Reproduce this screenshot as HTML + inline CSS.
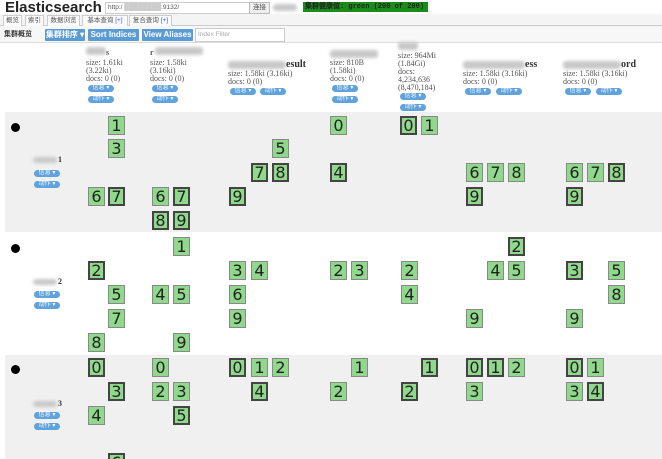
<!DOCTYPE html>
<html style="width:662px;height:459px;overflow:hidden"><head><meta charset="utf-8"><style>
body{margin:0;width:662px;height:459px;overflow:hidden;background:#fff;font-family:"Liberation Sans","Noto Sans CJK SC",sans-serif;position:relative}
.a{position:absolute}
.bl{position:absolute;background:#c8c8c8;filter:blur(1.5px);border-radius:3px}
.s{position:absolute;width:15px;height:17px;background:#90d98c;border:1px solid #888;font:16px/17px "DejaVu Sans",sans-serif;color:#222;text-align:center}
.p{border:2px solid #444;width:13px;height:15px;line-height:15px}
.t{position:absolute;font:8px/8px "Liberation Serif","Noto Serif CJK SC",serif;color:#555;white-space:nowrap}
.b{position:absolute;width:26px;height:7px;background:#5fa2dc;border-radius:4px;color:#fff;font-size:6px;line-height:7px;text-align:center}
.tb{position:absolute;top:29px;height:12px;background:#5b9bd5;color:#fff;font:bold 8px/12px "Liberation Sans","Noto Sans CJK SC",sans-serif;text-align:center;border-radius:1px}
.row{position:absolute;left:5px;width:657px;background:#f0f0f0}
.dot{position:absolute;width:9px;height:9px;border-radius:50%;background:#000}
.tab{position:absolute;top:15px;height:10px;border:1px solid #ccc;border-bottom:none;font-size:6.5px;line-height:10px;color:#555;text-align:center;background:#fafafa}
</style></head><body>
<div class="a" style="left:0;top:14px;width:662px;height:12px;background:#f4f4f4"></div>
<div class="a" style="left:5px;top:0;font:bold 15px/15px 'Liberation Sans',sans-serif;color:#222">Elasticsearch</div>
<div class="a" style="left:105px;top:2px;width:141px;height:10px;border:1px solid #ccc;font-size:6.5px;line-height:10px;color:#555;padding-left:2px">http:/ <span style="color:#ccc">████████</span>:9132/</div>
<div class="a" style="left:249px;top:2px;width:19px;height:10px;border:1px solid #bbb;background:#eee;font-size:6.5px;line-height:10px;text-align:center;color:#444">连接</div>
<div class="bl" style="left:273px;top:4px;width:24px;height:7px"></div>
<div class="a" style="left:303px;top:2px;width:123px;height:10px;background:#1a8c1a;font:bold 7px/10px 'Liberation Mono',monospace;color:#222;padding-left:2px">集群健康值: green (200 of 200)</div>
<div class="a" style="left:0;top:25px;width:662px;height:1px;background:#ccc"></div>
<div class="tab" style="left:3px;width:17px;background:#fff">概览</div>
<div class="tab" style="left:25px;width:17px">索引</div>
<div class="tab" style="left:47px;width:31px">数据浏览</div>
<div class="tab" style="left:82px;width:44px">基本查询 <span style="color:#36c">[+]</span></div>
<div class="tab" style="left:129px;width:41px">复合查询 <span style="color:#36c">[+]</span></div>
<div class="a" style="left:0;top:26px;width:662px;height:16px;background:#f7f7f7;border-bottom:1px solid #ddd"></div>
<div class="a" style="left:4px;top:29px;font:bold 7px/12px 'Liberation Sans','Noto Sans CJK SC',sans-serif;color:#333">集群概览</div>
<div class="tb" style="left:45px;width:40px">集群排序 ▾</div>
<div class="tb" style="left:88px;width:51px">Sort Indices ▾</div>
<div class="tb" style="left:142px;width:51px">View Aliases ▾</div>
<div class="a" style="left:195px;top:28px;width:86px;height:12px;border:1px solid #ccc;background:#fff;font-size:6.5px;line-height:12px;color:#aaa;padding-left:2px">Index Filter</div>

<div class="bl" style="left:86px;top:47px;width:20px;height:8px"></div><div class="t" style="left:106px;top:49px;font-weight:bold">s</div>
<div class="t" style="left:86px;top:59px">size: 1.61ki</div><div class="t" style="left:86px;top:67px">(3.22ki)</div><div class="t" style="left:86px;top:75px">docs: 0 (0)</div>
<div class="b" style="left:88px;top:85px">信息 ▾</div><div class="b" style="left:88px;top:96px">动作 ▾</div>

<div class="t" style="left:150px;top:49px;font-weight:bold">r</div><div class="bl" style="left:155px;top:47px;width:48px;height:8px"></div>
<div class="t" style="left:150px;top:59px">size: 1.58ki</div><div class="t" style="left:150px;top:67px">(3.16ki)</div><div class="t" style="left:150px;top:75px">docs: 0 (0)</div>
<div class="b" style="left:152px;top:85px">信息 ▾</div><div class="b" style="left:152px;top:96px">动作 ▾</div>

<div class="bl" style="left:228px;top:61px;width:58px;height:8px"></div><div class="t" style="left:286px;top:60px;font-weight:bold;font-size:10px;line-height:10px;color:#333">esult</div>
<div class="t" style="left:228px;top:70px">size: 1.58ki (3.16ki)</div><div class="t" style="left:228px;top:78px">docs: 0 (0)</div>
<div class="b" style="left:230px;top:88px">信息 ▾</div><div class="b" style="left:260px;top:88px">动作 ▾</div>

<div class="bl" style="left:330px;top:50px;width:48px;height:8px"></div>
<div class="t" style="left:330px;top:59px">size: 810B</div><div class="t" style="left:330px;top:67px">(1.58ki)</div><div class="t" style="left:330px;top:75px">docs: 0 (0)</div>
<div class="b" style="left:332px;top:85px">信息 ▾</div><div class="b" style="left:332px;top:96px">动作 ▾</div>

<div class="bl" style="left:398px;top:42px;width:20px;height:8px"></div>
<div class="t" style="left:398px;top:52px">size: 964Mi</div><div class="t" style="left:398px;top:60px">(1.84Gi)</div><div class="t" style="left:398px;top:68px">docs:</div><div class="t" style="left:398px;top:76px">4,234,636</div><div class="t" style="left:398px;top:84px">(8,470,184)</div>
<div class="b" style="left:400px;top:93px">信息 ▾</div><div class="b" style="left:400px;top:104px">动作 ▾</div>

<div class="bl" style="left:463px;top:61px;width:62px;height:8px"></div><div class="t" style="left:525px;top:60px;font-weight:bold;font-size:10px;line-height:10px;color:#333">ess</div>
<div class="t" style="left:463px;top:70px">size: 1.58ki (3.16ki)</div><div class="t" style="left:463px;top:78px">docs: 0 (0)</div>
<div class="b" style="left:465px;top:88px">信息 ▾</div><div class="b" style="left:496px;top:88px">动作 ▾</div>

<div class="bl" style="left:563px;top:61px;width:58px;height:8px"></div><div class="t" style="left:621px;top:60px;font-weight:bold;font-size:10px;line-height:10px;color:#333">ord</div>
<div class="t" style="left:563px;top:70px">size: 1.58ki (3.16ki)</div><div class="t" style="left:563px;top:78px">docs: 0 (0)</div>
<div class="b" style="left:565px;top:88px">信息 ▾</div><div class="b" style="left:596px;top:88px">动作 ▾</div>

<div class="row" style="top:112px;height:120px"></div>
<div class="row" style="top:355px;height:104px"></div>
<div class="dot" style="left:11px;top:123px"></div>
<div class="dot" style="left:11px;top:244px"></div>
<div class="dot" style="left:11px;top:365px"></div>

<div class="bl" style="left:33px;top:157px;width:24px;height:6px"></div><div class="t" style="left:58px;top:156px;font-weight:bold;color:#333">1</div>
<div class="b" style="left:34px;top:170px">信息 ▾</div><div class="b" style="left:34px;top:181px">动作 ▾</div>
<div class="bl" style="left:33px;top:279px;width:24px;height:6px"></div><div class="t" style="left:58px;top:278px;font-weight:bold;color:#333">2</div>
<div class="b" style="left:34px;top:291px">信息 ▾</div><div class="b" style="left:34px;top:302px">动作 ▾</div>
<div class="bl" style="left:33px;top:401px;width:24px;height:6px"></div><div class="t" style="left:58px;top:400px;font-weight:bold;color:#333">3</div>
<div class="b" style="left:34px;top:412px">信息 ▾</div><div class="b" style="left:34px;top:423px">动作 ▾</div>

<div class="s" style="left:108px;top:116px">1</div>
<div class="s" style="left:330px;top:116px">0</div>
<div class="s p" style="left:400px;top:116px">0</div>
<div class="s" style="left:421px;top:116px">1</div>
<div class="s" style="left:108px;top:139px">3</div>
<div class="s" style="left:272px;top:139px">5</div>
<div class="s p" style="left:251px;top:163px">7</div>
<div class="s p" style="left:272px;top:163px">8</div>
<div class="s p" style="left:330px;top:163px">4</div>
<div class="s" style="left:466px;top:163px">6</div>
<div class="s" style="left:487px;top:163px">7</div>
<div class="s" style="left:508px;top:163px">8</div>
<div class="s" style="left:566px;top:163px">6</div>
<div class="s" style="left:587px;top:163px">7</div>
<div class="s p" style="left:608px;top:163px">8</div>
<div class="s" style="left:88px;top:187px">6</div>
<div class="s p" style="left:108px;top:187px">7</div>
<div class="s" style="left:152px;top:187px">6</div>
<div class="s p" style="left:173px;top:187px">7</div>
<div class="s p" style="left:229px;top:187px">9</div>
<div class="s p" style="left:466px;top:187px">9</div>
<div class="s p" style="left:566px;top:187px">9</div>
<div class="s p" style="left:152px;top:211px">8</div>
<div class="s p" style="left:173px;top:211px">9</div>
<div class="s" style="left:173px;top:237px">1</div>
<div class="s p" style="left:508px;top:237px">2</div>
<div class="s p" style="left:88px;top:261px">2</div>
<div class="s" style="left:229px;top:261px">3</div>
<div class="s" style="left:251px;top:261px">4</div>
<div class="s" style="left:330px;top:261px">2</div>
<div class="s" style="left:351px;top:261px">3</div>
<div class="s" style="left:401px;top:261px">2</div>
<div class="s" style="left:487px;top:261px">4</div>
<div class="s" style="left:508px;top:261px">5</div>
<div class="s p" style="left:566px;top:261px">3</div>
<div class="s" style="left:608px;top:261px">5</div>
<div class="s" style="left:108px;top:285px">5</div>
<div class="s" style="left:152px;top:285px">4</div>
<div class="s" style="left:173px;top:285px">5</div>
<div class="s" style="left:229px;top:285px">6</div>
<div class="s" style="left:401px;top:285px">4</div>
<div class="s" style="left:608px;top:285px">8</div>
<div class="s" style="left:108px;top:309px">7</div>
<div class="s" style="left:229px;top:309px">9</div>
<div class="s" style="left:466px;top:309px">9</div>
<div class="s" style="left:566px;top:309px">9</div>
<div class="s" style="left:88px;top:333px">8</div>
<div class="s" style="left:173px;top:333px">9</div>
<div class="s p" style="left:88px;top:358px">0</div>
<div class="s" style="left:152px;top:358px">0</div>
<div class="s p" style="left:229px;top:358px">0</div>
<div class="s" style="left:251px;top:358px">1</div>
<div class="s" style="left:272px;top:358px">2</div>
<div class="s" style="left:351px;top:358px">1</div>
<div class="s p" style="left:421px;top:358px">1</div>
<div class="s p" style="left:466px;top:358px">0</div>
<div class="s p" style="left:487px;top:358px">1</div>
<div class="s" style="left:508px;top:358px">2</div>
<div class="s p" style="left:566px;top:358px">0</div>
<div class="s" style="left:587px;top:358px">1</div>
<div class="s p" style="left:108px;top:382px">3</div>
<div class="s" style="left:152px;top:382px">2</div>
<div class="s" style="left:173px;top:382px">3</div>
<div class="s p" style="left:251px;top:382px">4</div>
<div class="s" style="left:330px;top:382px">2</div>
<div class="s p" style="left:401px;top:382px">2</div>
<div class="s" style="left:466px;top:382px">3</div>
<div class="s" style="left:566px;top:382px">3</div>
<div class="s p" style="left:587px;top:382px">4</div>
<div class="s" style="left:88px;top:406px">4</div>
<div class="s p" style="left:173px;top:406px">5</div>
<div class="s p" style="left:108px;top:453px">6</div>
</body></html>
